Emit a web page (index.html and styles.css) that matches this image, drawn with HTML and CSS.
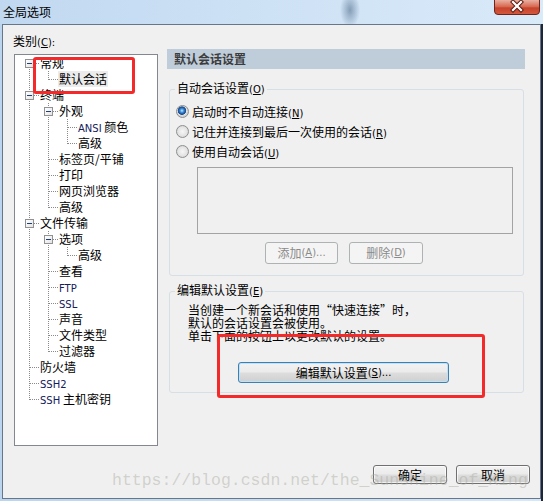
FILE: index.html
```html
<!DOCTYPE html>
<html lang="zh-CN">
<head>
<meta charset="utf-8">
<title>全局选项</title>
<link rel="stylesheet" href="styles.css">
</head>
<body>
<div class="titlebar">
  <span class="title">全局选项</span>
  <span class="close">
    <svg width="46" height="15" viewBox="0 0 46 15">
      <defs>
        <linearGradient id="cg" x1="0" y1="0" x2="0" y2="1">
          <stop offset="0" stop-color="#eab0a2"/>
          <stop offset="0.45" stop-color="#d86a52"/>
          <stop offset="0.55" stop-color="#c7432c"/>
          <stop offset="1" stop-color="#d45a3e"/>
        </linearGradient>
      </defs>
      <path d="M0.5 0 V11 Q0.5 14.5 4 14.5 H42 Q45.5 14.5 45.5 11 V0" fill="url(#cg)" stroke="#6e261c"/>
      <path d="M19 2 L27 10 M27 2 L19 10" stroke="#5a1d14" stroke-width="4.2" stroke-linecap="square"/>
      <path d="M19 2 L27 10 M27 2 L19 10" stroke="#ffffff" stroke-width="2.2" stroke-linecap="square"/>
    </svg>
  </span>
</div>
<div class="client">
  <div class="main">
    <div class="left">
      <div class="cat-label">类别<span class="en">(<u>C</u>):</span></div>
      <div class="tree">
        <div class="row"><span class="c F"><span class="box"><i></i></span></span><span class="t">常规</span></div>
        <div class="row"><span class="c I"></span><span class="c L"></span><span class="t sel">默认会话</span></div>
        <div class="row"><span class="c T"><span class="box"><i></i></span></span><span class="t">终端</span></div>
        <div class="row"><span class="c I"></span><span class="c T"><span class="box"><i></i></span></span><span class="t">外观</span></div>
        <div class="row"><span class="c I"></span><span class="c I"></span><span class="c T"></span><span class="t"><span class="en">ANSI</span> 颜色</span></div>
        <div class="row"><span class="c I"></span><span class="c I"></span><span class="c L"></span><span class="t">高级</span></div>
        <div class="row"><span class="c I"></span><span class="c T"></span><span class="t">标签页/平铺</span></div>
        <div class="row"><span class="c I"></span><span class="c T"></span><span class="t">打印</span></div>
        <div class="row"><span class="c I"></span><span class="c T"></span><span class="t">网页浏览器</span></div>
        <div class="row"><span class="c I"></span><span class="c L"></span><span class="t">高级</span></div>
        <div class="row"><span class="c T"><span class="box"><i></i></span></span><span class="t">文件传输</span></div>
        <div class="row"><span class="c I"></span><span class="c T"><span class="box"><i></i></span></span><span class="t">选项</span></div>
        <div class="row"><span class="c I"></span><span class="c I"></span><span class="c L"></span><span class="t">高级</span></div>
        <div class="row"><span class="c I"></span><span class="c T"></span><span class="t">查看</span></div>
        <div class="row"><span class="c I"></span><span class="c T"></span><span class="t"><span class="en">FTP</span></span></div>
        <div class="row"><span class="c I"></span><span class="c T"></span><span class="t"><span class="en">SSL</span></span></div>
        <div class="row"><span class="c I"></span><span class="c T"></span><span class="t">声音</span></div>
        <div class="row"><span class="c I"></span><span class="c T"></span><span class="t">文件类型</span></div>
        <div class="row"><span class="c I"></span><span class="c L"></span><span class="t">过滤器</span></div>
        <div class="row"><span class="c T"></span><span class="t">防火墙</span></div>
        <div class="row"><span class="c T"></span><span class="t"><span class="en">SSH2</span></span></div>
        <div class="row"><span class="c L"></span><span class="t"><span class="en">SSH</span> 主机密钥</span></div>
      </div>
    </div>
    <div class="right">
      <div class="header">默认会话设置</div>
      <fieldset class="group g1">
        <legend>自动会话设置<span class="en">(<u>O</u>)</span></legend>
        <div class="radio-row first"><span class="radio on"></span><span>启动时不自动连接<span class="en">(<u>N</u>)</span></span></div>
        <div class="radio-row"><span class="radio"></span><span>记住并连接到最后一次使用的会话<span class="en">(<u>R</u>)</span></span></div>
        <div class="radio-row"><span class="radio"></span><span>使用自动会话<span class="en">(<u>U</u>)</span></span></div>
        <div class="listbox"></div>
        <div class="btns">
          <button class="btn dis w73" disabled>添加<span class="en">(<u>A</u>)...</span></button>
          <button class="btn dis w74" disabled>删除<span class="en">(<u>D</u>)</span></button>
        </div>
      </fieldset>
      <fieldset class="group g2">
        <legend>编辑默认设置<span class="en">(<u>E</u>)</span></legend>
        <div class="desc">当创建一个新会话和使用“快速连接”时，<br>默认的会话设置会被使用。<br>单击下面的按钮上以更改默认的设置。</div>
        <button class="btn def">编辑默认设置<span class="en">(<u>S</u>)...</span></button>
      </fieldset>
    </div>
  </div>
  <div class="footer">
    <button class="btn ok">确定</button>
    <button class="btn cancel">取消</button>
  </div>
  <div class="mark mark1"></div>
  <div class="mark mark2"></div>
  <div class="watermark">https://blog.csdn.net/the_Sunshine_of_King</div>
</div>
</body>
</html>
```
FILE: styles.css
```css
* { box-sizing: border-box; }
html, body { margin: 0; padding: 0; }
body {
  width: 543px;
  height: 501px;
  overflow: hidden;
  font-family: "Noto Sans CJK SC", sans-serif;
  font-size: 12px;
  color: #000;
  background:
    linear-gradient(to right, transparent 541px, #1c2636 541px),
    linear-gradient(to right, #bcd5ee 0, #c8ddf2 50%, #d6e7f8 100%);
}
.en { font-family: "DejaVu Sans", sans-serif; font-size: 10px; }
u { text-decoration: underline; text-underline-offset: 1px; }

.titlebar {
  height: 24px;
  display: flex;
  justify-content: space-between;
  align-items: flex-start;
  padding: 0 3px;
  background:
    radial-gradient(ellipse 10px 18px at 350px 10px, rgba(70,100,130,0.55), rgba(70,100,130,0) 100%),
    linear-gradient(to right, #c0d8f0 0, #cde1f5 45%, #d9eaf9 100%);
}
.title { line-height: 24px; }
.close { width: 46px; height: 15px; display: block; }
.close svg { display: block; }

.client {
  margin: 0 2px;
  width: 539px;
  height: 475px;
  border: 1px solid #66778a;
  background: #f0f0f0;
  position: relative;
  display: flex;
  flex-direction: column;
}
.main { display: flex; }
.left { margin-left: 11px; width: 144px; }
.cat-label { height: 29px; padding-top: 8px; line-height: 16px; margin-left: -1px; }
.tree {
  height: 392px;
  border: 1px solid #828790;
  background: #fff;
  padding-left: 5px;
}
.row { display: flex; height: 16px; line-height: 16px; white-space: nowrap; }
.c {
  --dv: repeating-linear-gradient(to bottom, #8a8a8a 0 1px, transparent 1px 2px);
  --dh: repeating-linear-gradient(to right, #8a8a8a 0 1px, transparent 1px 2px);
  width: 19px;
  height: 16px;
  flex: none;
  display: flex;
}
.c.I { background: var(--dv) 9px 0 / 1px 16px no-repeat; }
.c.T { background: var(--dv) 9px 0 / 1px 16px no-repeat, var(--dh) 10px 8px / 9px 1px no-repeat; }
.c.L { background: var(--dv) 9px 0 / 1px 9px no-repeat, var(--dh) 10px 8px / 9px 1px no-repeat; }
.c.F { background: var(--dv) 9px 8px / 1px 8px no-repeat, var(--dh) 10px 8px / 9px 1px no-repeat; }
.box {
  width: 9px;
  height: 9px;
  margin: 4px 0 0 5px;
  border: 1px solid #919191;
  background: linear-gradient(135deg, #ffffff 0, #e4e4e4 100%);
  display: flex;
  align-items: flex-start;
}
.box i { display: block; width: 5px; height: 1px; margin: 3px 0 0 1px; background: #1e3e78; }
.t { margin-left: 1px; }
.t.sel { margin-left: 0; padding: 0 1px; background: #ececec; }
.t .en { color: #14205a; }

.right { margin-left: 9px; width: 358px; padding-top: 24px; }
.header {
  height: 20px;
  line-height: 20px;
  background: #bfcddb;
  color: #3c3c3c;
  font-weight: bold;
  padding-left: 7px;
}
fieldset.group {
  margin: 11px 0 0 2px;
  width: 355px;
  min-width: 0;
  padding: 0 0 11px 0;
  border: 1px solid #d5dfe5;
  border-radius: 3px;
}
fieldset.g2 { margin-top: 6px; padding-bottom: 9px; }
legend { margin-left: 5px; padding: 0 2px; line-height: 16px; }
.radio-row { display: flex; align-items: center; height: 20px; padding-left: 6px; white-space: nowrap; }
.radio-row.first { margin-top: 3px; }
.radio {
  width: 13px;
  height: 13px;
  flex: none;
  margin-right: 3px;
  border-radius: 50%;
  border: 1px solid #8c8e90;
  background: radial-gradient(circle at 50% 50%, #f6f6f6 0, #e4e4e4 55%, #cacaca 100%);
}
.radio.on {
  background: radial-gradient(circle at 45% 42%, #cbe9ff 0, #4b9be0 1.6px, #1d58a8 3.2px, #244f86 3.9px, #e8e8e8 4.6px, #d8d8d8 5px, #c6c6c6 100%);
}
.listbox {
  margin: 6px 0 0 27px;
  width: 316px;
  height: 67px;
  border: 1px solid #a3a3a3;
  background: #f0f0f0;
}
.btns { display: flex; gap: 11px; margin: 8px 0 0 95px; }
.btn {
  font-family: "Noto Sans CJK SC", sans-serif;
  font-size: 12px;
  color: #000;
  padding: 0;
  border: 1px solid #707070;
  border-radius: 3px;
  background: linear-gradient(#f2f2f2 0, #ebebeb 48%, #dddddd 52%, #cfcfcf 100%);
  box-shadow: inset 0 0 0 1px rgba(255,255,255,0.7);
  line-height: 16px;
  display: flex;
  align-items: center;
  justify-content: center;
  white-space: nowrap;
}
.btn.dis {
  height: 22px;
  color: #8a8a8a;
  border-color: #adb2b5;
  background: #f4f4f4;
  box-shadow: none;
}
.w73 { width: 73px; }
.w74 { width: 74px; }
.desc { margin: 3px 0 0 18px; line-height: 13px; white-space: nowrap; }
.btn.def {
  margin: 20px 0 0 68px;
  width: 211px;
  height: 21px;
  border-color: #3c7fb1;
  box-shadow: inset 0 0 0 1px #bfe2f7;
}
.footer {
  display: flex;
  justify-content: flex-end;
  gap: 9px;
  padding-right: 10px;
  margin-top: 19px;
}
.btn.ok, .btn.cancel { width: 74px; height: 19px; }

.mark {
  position: absolute;
  border: 3px solid #f42a2a;
  border-radius: 3px;
  pointer-events: none;
}
.mark1 { left: 30px; top: 32px; width: 102px; height: 37px; }
.mark2 { left: 214px; top: 309px; width: 268px; height: 64px; }
.watermark {
  position: absolute;
  left: 109px;
  top: 446px;
  font-family: "Liberation Mono", monospace;
  font-size: 16.5px;
  line-height: 20px;
  color: rgba(170,170,158,0.45);
  white-space: nowrap;
  pointer-events: none;
}
```
